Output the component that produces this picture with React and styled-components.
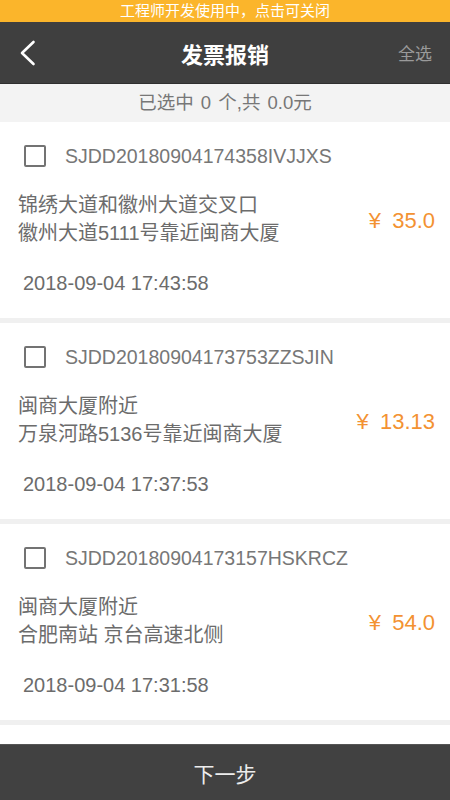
import React from "react";
import styled, { createGlobalStyle } from "styled-components";

const Global = createGlobalStyle`
  html, body { margin: 0; padding: 0; }
  body { font-family: "Liberation Sans", "Noto Sans CJK SC", sans-serif; background: #f0f0f0; }
  * { box-sizing: border-box; }
`;

const Page = styled.div`
  height: 100vh;
  display: flex;
  flex-direction: column;
  overflow: hidden;
`;

const DevBar = styled.div`
  height: 22px;
  background: #fbb52b;
  color: #fff;
  font-size: 15px;
  line-height: 22px;
  text-align: center;
  flex: none;
`;

const Header = styled.div`
  height: 62px;
  background: #3f3f3f;
  display: grid;
  grid-template-columns: 80px 1fr 80px;
  align-items: center;
  flex: none;
  border-bottom: 1px solid #2f2f2f;
`;

const Back = styled.div`
  padding-left: 19px;
  display: flex;
  align-items: center;
`;

const Title = styled.div`
  text-align: center;
  color: #fff;
  font-size: 22px;
  font-weight: 700;
`;

const SelectAll = styled.div`
  text-align: right;
  padding-right: 18px;
  color: #9a9a9a;
  font-size: 17px;
`;

const Summary = styled.div`
  height: 38px;
  background: #f3f3f3;
  color: #777;
  font-size: 18.5px;
  word-spacing: 2px;
  line-height: 38px;
  text-align: center;
  flex: none;
`;

const List = styled.div`
  flex: 1;
  overflow: hidden;
  display: flex;
  flex-direction: column;
  gap: 5px;
  background: #f0f0f0;
`;

const Card = styled.div`
  background: #fff;
  padding: 23px 0 21px;
  flex: none;
  min-height: ${(p) => (p.$empty ? "196px" : "auto")};
`;

const Head = styled.div`
  display: flex;
  align-items: center;
  gap: 19px;
  padding-left: 24px;
  height: 22px;
`;

const Check = styled.div`
  width: 22px;
  height: 22px;
  border: 2.5px solid #737373;
  border-radius: 2px;
  flex: none;
`;

const OrderNo = styled.div`
  color: #777;
  font-size: 19.5px;
  line-height: 22px;
`;

const Body = styled.div`
  display: flex;
  align-items: center;
  justify-content: space-between;
  margin-top: 24px;
  padding: 0 15px 0 18px;
`;

const Address = styled.div`
  color: #6c6c6c;
  font-size: 20px;
  line-height: 28px;
`;

const Price = styled.div`
  color: #f39232;
  font-size: 22px;
  word-spacing: 5px;
  padding-top: 4px;
`;

const DateText = styled.div`
  margin-top: 22px;
  padding-left: 23px;
  color: #6c6c6c;
  font-size: 20px;
  line-height: 28px;
`;

const Footer = styled.div`
  height: 56px;
  flex: none;
  background: #414141;
  border-top: 1px solid #555;
  color: #ececec;
  font-size: 21px;
  display: flex;
  align-items: center;
  justify-content: center;
`;

const orders = [
  {
    no: "SJDD20180904174358IVJJXS",
    a1: "锦绣大道和徽州大道交叉口",
    a2: "徽州大道5111号靠近闽商大厦",
    price: "¥ 35.0",
    date: "2018-09-04 17:43:58",
  },
  {
    no: "SJDD20180904173753ZZSJIN",
    a1: "闽商大厦附近",
    a2: "万泉河路5136号靠近闽商大厦",
    price: "¥ 13.13",
    date: "2018-09-04 17:37:53",
  },
  {
    no: "SJDD20180904173157HSKRCZ",
    a1: "闽商大厦附近",
    a2: "合肥南站 京台高速北侧",
    price: "¥ 54.0",
    date: "2018-09-04 17:31:58",
  },
];

export default function App() {
  return (
    <Page>
      <Global />
      <DevBar>工程师开发使用中，点击可关闭</DevBar>
      <Header>
        <Back>
          <svg width="18" height="26" viewBox="0 0 18 26">
            <path d="M14.5 2 L3 13 L14.5 24" fill="none" stroke="#fff" strokeWidth="2.6" strokeLinecap="round" strokeLinejoin="round" />
          </svg>
        </Back>
        <Title>发票报销</Title>
        <SelectAll>全选</SelectAll>
      </Header>
      <Summary>已选中 0 个,共 0.0元</Summary>
      <List>
        {orders.map((o) => (
          <Card key={o.no}>
            <Head>
              <Check />
              <OrderNo>{o.no}</OrderNo>
            </Head>
            <Body>
              <Address>
                <div>{o.a1}</div>
                <div>{o.a2}</div>
              </Address>
              <Price>{o.price}</Price>
            </Body>
            <DateText>{o.date}</DateText>
          </Card>
        ))}
        <Card $empty />
      </List>
      <Footer>下一步</Footer>
    </Page>
  );
}
